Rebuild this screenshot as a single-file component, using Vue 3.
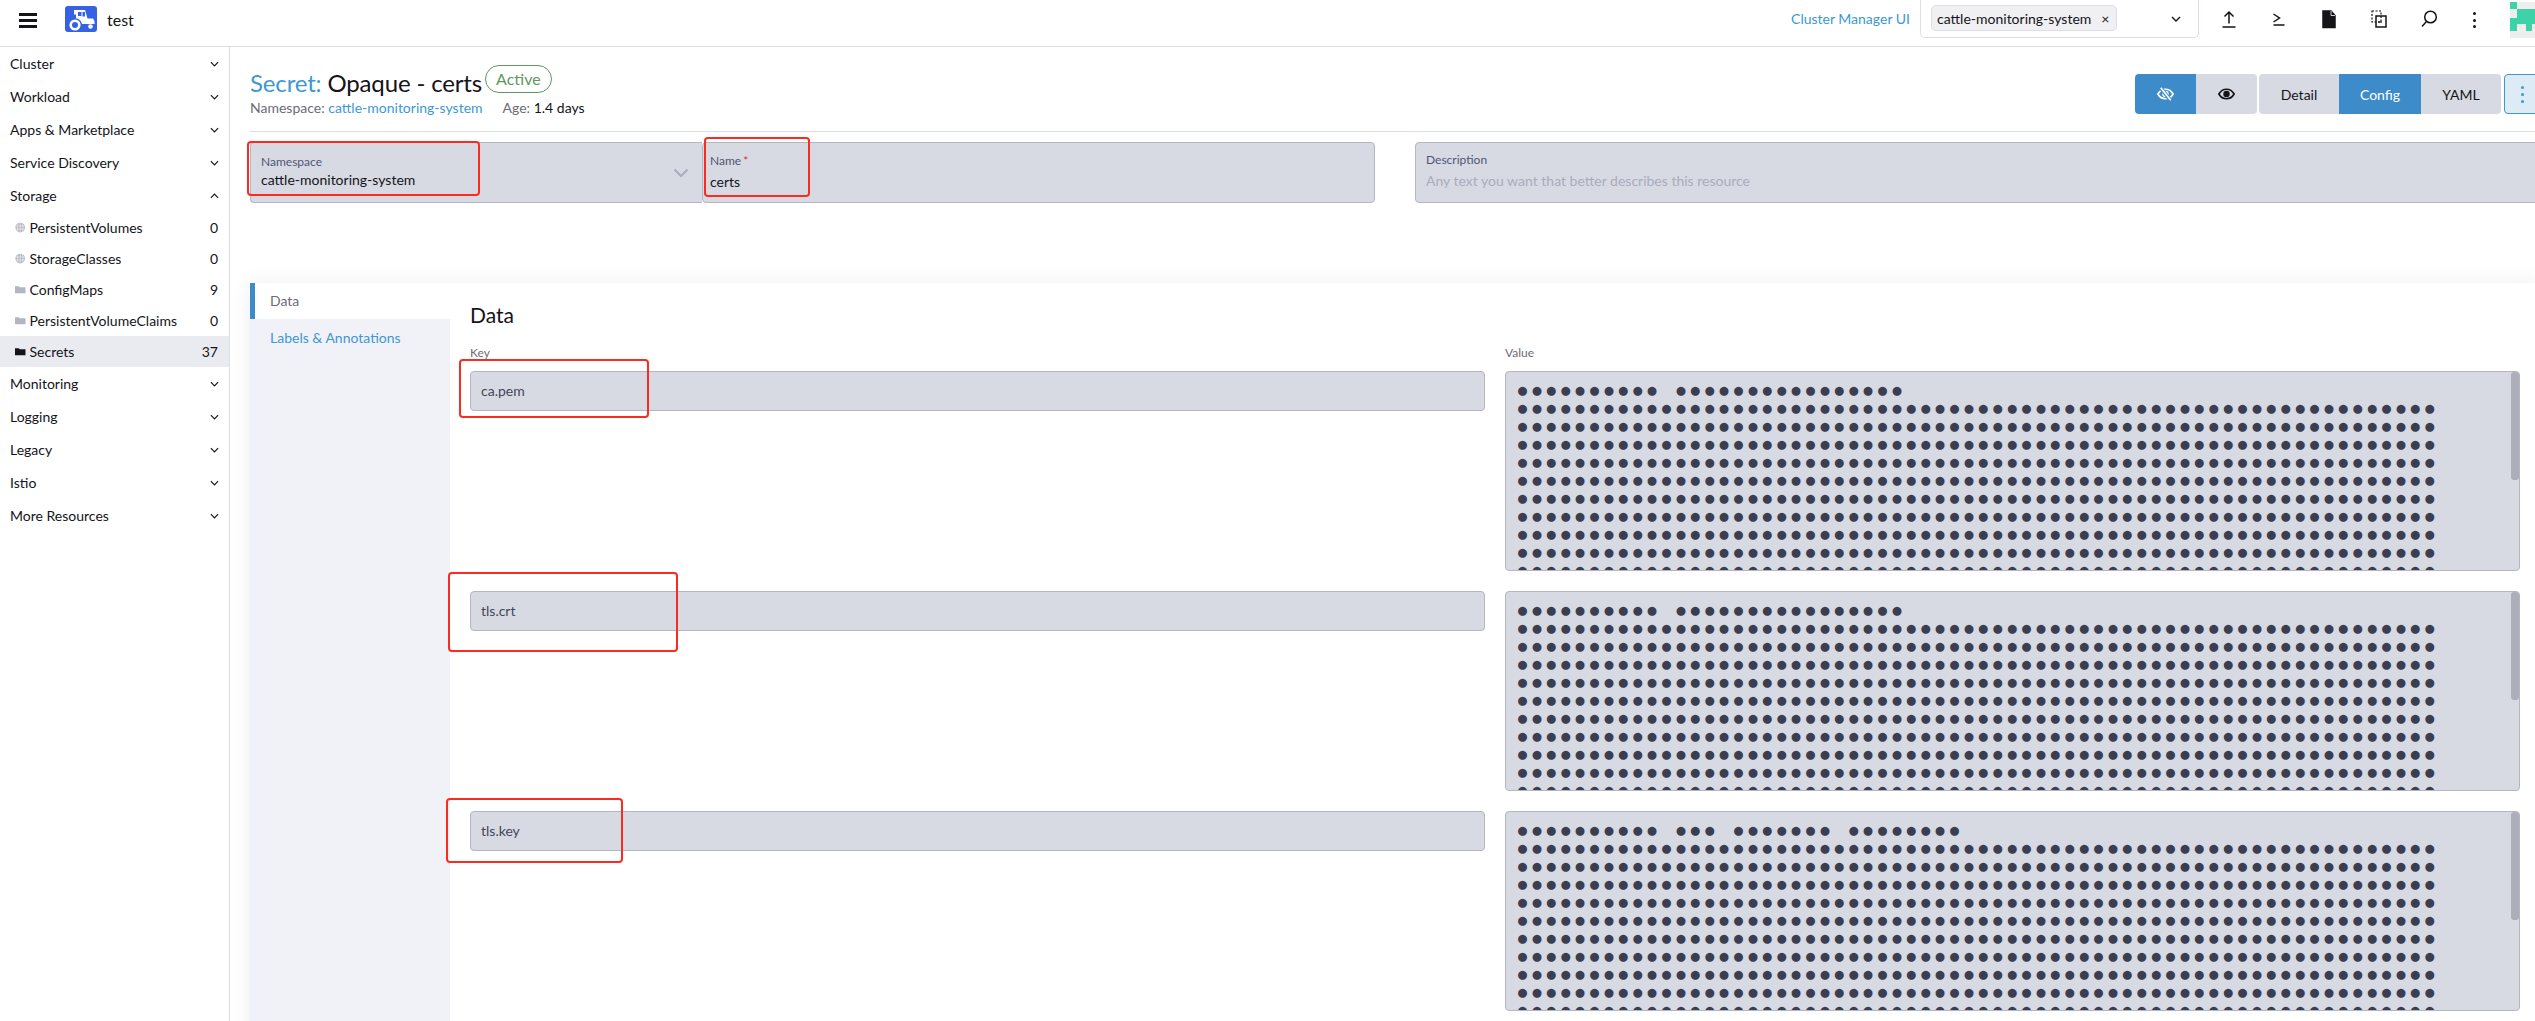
<template>
    <div class="page">
        <header class="topbar">
            <button class="burger" aria-label="Menu"><span></span><span></span><span></span></button>
            <svg class="logo" viewBox="0 0 32 26">
                <rect width="32" height="26" rx="3" fill="#3462e0" />
                <path d="M9 4h11l2.500 8.500H28l1.500 2.500v3H17c-.5-3-3-5.500-6-5.500V8.500H9z" fill="#fff" />
                <rect x="13" y="6" width="3.500" height="4" fill="#3462e0" />
                <rect x="17.500" y="6" width="2.500" height="4.500" fill="#3462e0" />
                <circle cx="10" cy="19" r="4.300" fill="none" stroke="#fff" stroke-width="2.600" />
                <circle cx="25.500" cy="20.500" r="2.300" fill="#fff" />
            </svg>
            <span class="cluster-name">test</span>
            <a class="cluster-link">Cluster Manager UI</a>
            <div class="ns-select">
                <span class="chip">cattle-monitoring-system<i>×</i></span>
                <svg class="ns-caret" viewBox="0 0 10 6"><path d="M1 1l4 4 4-4" /></svg>
            </div>
            <div class="tool" v-for="icon in tools" :key="icon">
                <svg viewBox="0 0 20 20" class="tool-icon">
                    <template v-if="icon === 'upload'">
                        <path d="M10 14.500V3M5.500 7.500L10 3l4.500 4.500M3.500 18h13" />
                    </template>
                    <template v-else-if="icon === 'shell'">
                        <path d="M4.500 5l6 4-6 4M4.500 16h11" />
                    </template>
                    <template v-else-if="icon === 'file'">
                        <path class="solid" d="M4 2h8l4 4.500V18.500H4z" />
                        <path d="M12 2v4.500h4" class="thin-light" />
                    </template>
                    <template v-else-if="icon === 'copy'">
                        <path class="thin" stroke-dasharray="2 1.500" d="M3 2h9v11H3z" />
                        <path d="M7 7h10v11H7z" />
                        <path class="thin" d="M9 13h4" />
                    </template>
                    <template v-else-if="icon === 'search'">
                        <circle cx="11.500" cy="8" r="5.800" />
                        <path d="M7.500 12.500L3 17.500" />
                    </template>
                </svg>
                <span v-if="icon === 'more'" class="kebab"><b></b><b></b><b></b></span>
            </div>
            <div class="avatar">
                <svg width="36" height="36" viewBox="0 0 5 5" shape-rendering="crispEdges">
                    <rect width="5" height="5" fill="#eeeeee" />
                    <path d="M0 0h1v1H0zM1 1h3v1.200H1zM0 2.200h4v.8H0zM0 3h1v1H0zM2.200 3H3v1h-.8z" fill="#3dd3a9" />
                </svg>
            </div>
        </header>

        <div class="layout">
            <aside class="sidebar">
                <template v-for="group in nav" :key="group.name">
                    <div class="nav-group">
                        <span>{{ group.name }}</span>
                        <svg class="chev" :class="{ up: group.items }" viewBox="0 0 10 6"><path d="M1 1l4 4 4-4" /></svg>
                    </div>
                    <div
                        v-for="item in group.items"
                        :key="item.name"
                        class="nav-item"
                        :class="{ active: item.active }"
                    >
                        <svg class="nav-icon" viewBox="0 0 14 14">
                            <template v-if="item.globe">
                                <circle cx="7" cy="7" r="6.500" class="globe-fill" />
                                <path class="globe-lines" d="M.5 5h13M.5 9h13M7 .5v13M4 1.500C3 5 3 9 4 12.500M10 1.500c1 3.500 1 7.500 0 11" />
                            </template>
                            <path v-else class="folder" d="M0 2.500h5l1.500 1.500H14v8H0z" />
                        </svg>
                        <span class="nav-label">{{ item.name }}</span>
                        <span class="nav-count">{{ item.count }}</span>
                    </div>
                </template>
            </aside>

            <main class="content">
                <section class="masthead">
                    <div>
                        <div class="title-row">
                            <h1><a>Secret:</a> Opaque - certs</h1>
                            <span class="badge">Active</span>
                        </div>
                        <div class="subtitle">
                            <span>Namespace: <a>cattle-monitoring-system</a></span>
                            <span class="age">Age: <em>1.4 days</em></span>
                        </div>
                    </div>
                    <div class="actions">
                        <div class="btn-group">
                            <button class="btn on">
                                <svg viewBox="0 0 20 14" class="eye light">
                                    <path d="M2 7c2-3.500 5-5 8-5s6 1.500 8 5c-2 3.500-5 5-8 5s-6-1.500-8-5z" />
                                    <circle cx="10" cy="7" r="2.500" />
                                    <path class="slash-gap" d="M4.500 0l11 14" />
                                    <path d="M5 .5l10.500 13" />
                                </svg>
                            </button>
                            <button class="btn">
                                <svg viewBox="0 0 20 14" class="eye">
                                    <path d="M2 7c2-3.500 5-5 8-5s6 1.500 8 5c-2 3.500-5 5-8 5s-6-1.500-8-5z" />
                                    <circle cx="10" cy="7" r="2.500" class="pupil" />
                                </svg>
                            </button>
                        </div>
                        <div class="btn-group modes">
                            <button class="btn">Detail</button>
                            <button class="btn on">Config</button>
                            <button class="btn">YAML</button>
                        </div>
                        <button class="btn-more"><span class="kebab blue"><b></b><b></b><b></b></span></button>
                    </div>
                </section>

                <section class="fields">
                    <div class="name-ns">
                        <div class="field ns">
                            <label>Namespace</label>
                            <div class="field-value">cattle-monitoring-system</div>
                            <svg class="field-caret" viewBox="0 0 16 10"><path d="M1.500 1.500L8 8l6.500-6.500" /></svg>
                        </div>
                        <div class="field name">
                            <label>Name <i>*</i></label>
                            <div class="field-value">certs</div>
                        </div>
                    </div>
                    <div class="field desc">
                        <label>Description</label>
                        <div class="field-value placeholder">Any text you want that better describes this resource</div>
                    </div>
                </section>

                <section class="tabbed">
                    <nav class="tabs">
                        <div class="tab selected">Data</div>
                        <div class="tab">Labels &amp; Annotations</div>
                    </nav>
                    <div class="tab-body">
                        <h2>Data</h2>
                        <div class="kv-grid">
                            <div class="kv-label">Key</div>
                            <div class="kv-label">Value</div>
                            <template v-for="row in secrets" :key="row.key">
                                <div class="key-input">{{ row.key }}</div>
                                <div class="value-input">
                                    <div v-for="(line, i) in row.lines" :key="i" class="concealed">{{ line }}</div>
                                    <div class="thumb"></div>
                                </div>
                            </template>
                        </div>
                    </div>
                </section>
            </main>
        </div>

        <div v-for="(mark, i) in marks" :key="i" class="mark" :style="mark"></div>
    </div>
</template>

<script setup>
const tools = ['upload', 'shell', 'file', 'copy', 'search', 'more'];

const nav = [
    { name: 'Cluster' },
    { name: 'Workload' },
    { name: 'Apps & Marketplace' },
    { name: 'Service Discovery' },
    {
        name: 'Storage',
        items: [
            { name: 'PersistentVolumes', count: 0, globe: true },
            { name: 'StorageClasses', count: 0, globe: true },
            { name: 'ConfigMaps', count: 9 },
            { name: 'PersistentVolumeClaims', count: 0 },
            { name: 'Secrets', count: 37, active: true },
        ],
    },
    { name: 'Monitoring' },
    { name: 'Logging' },
    { name: 'Legacy' },
    { name: 'Istio' },
    { name: 'More Resources' },
];

// values are shown concealed, one dot per character, spaces stay
const conceal = (text) => text.replace(/\S/g, '●');
const maskedLines = (head) => [conceal(head), ...Array(10).fill('●'.repeat(64))];

const secrets = [
    { key: 'ca.pem', lines: maskedLines('-----BEGIN CERTIFICATE-----') },
    { key: 'tls.crt', lines: maskedLines('-----BEGIN CERTIFICATE-----') },
    { key: 'tls.key', lines: maskedLines('-----BEGIN RSA PRIVATE KEY-----') },
];

// red annotation boxes drawn over the screenshot
const box = (x1, y1, x2, y2) => ({
    left: x1 + 'px',
    top: y1 + 'px',
    width: x2 - x1 + 'px',
    height: y2 - y1 + 'px',
});

const marks = [
    box(247, 141, 480, 196),
    box(704, 137, 810, 197),
    box(459, 359, 649, 418),
    box(448, 572, 678, 652),
    box(446, 798, 623, 863),
];
</script>

<style>
html,
body {
    margin: 0;
    background: #fff;
    overflow: hidden;
}
</style>

<style scoped>
.page {
    position: relative;
    width: 2535px;
    height: 1021px;
    overflow: hidden;
    font-family: Lato, "Noto Sans", sans-serif;
    font-size: 14px;
    color: #141419;
    background: #fff;
}

a {
    color: #3d98d3;
}

button {
    font: inherit;
    color: inherit;
    border: 0;
    padding: 0;
}

/* top bar */
.topbar {
    display: flex;
    align-items: flex-start;
    height: 46px;
    border-bottom: 1px solid #dcdee7;
}

.burger {
    display: flex;
    flex-direction: column;
    gap: 3.500px;
    width: 18px;
    margin: 13px 28px 0 19px;
    background: none;
}

.burger span {
    height: 2.500px;
    background: #141419;
}

.logo {
    width: 32px;
    height: 26px;
    margin-top: 6px;
}

.cluster-name {
    margin: 10px 0 0 10px;
    font-size: 16px;
    line-height: 20px;
}

.cluster-link {
    margin: 9px 10px 0 auto;
    line-height: 20px;
}

.ns-select {
    display: flex;
    align-items: flex-start;
    box-sizing: border-box;
    width: 279px;
    height: 38px;
    margin-right: 5px;
    padding: 5px 0 0 10px;
    border: 1px solid #dcdee7;
    border-top: 0;
    border-radius: 0 0 5px 5px;
}

.chip {
    display: flex;
    align-items: center;
    box-sizing: border-box;
    width: 186px;
    height: 26px;
    padding-left: 5px;
    background: #f0f0f3;
    border: 1px solid #dcdee7;
    border-radius: 5px;
    white-space: nowrap;
}

.chip i {
    margin-left: 10px;
    font-style: normal;
}

.ns-caret {
    width: 10px;
    height: 6px;
    margin: 11px 0 0 54px;
    fill: none;
    stroke: #141419;
    stroke-width: 1.400;
}

.tool {
    display: flex;
    justify-content: center;
    width: 50px;
    padding-top: 9px;
}

.tool:nth-last-child(2) {
    width: 41px;
    margin-right: 15px;
}

.tool-icon {
    width: 20px;
    height: 20px;
    fill: none;
    stroke: #141419;
    stroke-width: 1.500;
}

.tool:nth-last-child(2) .tool-icon {
    display: none;
}

.solid {
    fill: #141419;
}

.thin {
    stroke-width: 1.200;
}

.thin-light {
    stroke: #fff;
    stroke-width: 0.800;
}

.kebab {
    display: flex;
    flex-direction: column;
    gap: 3.500px;
    padding-top: 3px;
}

.kebab b {
    width: 3px;
    height: 3px;
    border-radius: 50%;
    background: #141419;
}

.kebab.blue {
    gap: 4px;
    padding: 0;
}

.kebab.blue b {
    width: 3px;
    height: 3px;
    background: #3d98d3;
}

.avatar {
    width: 25px;
    height: 36px;
    margin-top: 2px;
    overflow: hidden;
}

.avatar svg {
    display: block;
}

/* sidebar */
.layout {
    display: flex;
    height: 974px;
}

.sidebar {
    flex: 0 0 229px;
    border-right: 1px solid #dcdee7;
}

.nav-group {
    display: flex;
    align-items: center;
    justify-content: space-between;
    height: 33px;
    padding: 0 10px 0 10px;
    font-size: 14px;
}

.chev {
    width: 9px;
    height: 6px;
    fill: none;
    stroke: #141419;
    stroke-width: 1.300;
}

.chev.up {
    transform: rotate(180deg);
}

.nav-item {
    display: flex;
    align-items: center;
    height: 31px;
    padding: 0 11px 0 15px;
}

.nav-item.active {
    background: #eaebf0;
}

.nav-icon {
    flex: none;
    width: 10.500px;
    height: 11px;
    margin-right: 4px;
}

.globe-fill {
    fill: #b4b5c2;
}

.globe-lines {
    fill: none;
    stroke: #fff;
    stroke-width: 0.700;
}

.folder {
    fill: #b4b5c2;
}

.active .folder {
    fill: #141419;
}

.nav-label {
    flex: 1;
}

/* main column */
.content {
    flex: 0 0 2290px;
    padding-left: 20px;
}

.masthead {
    display: flex;
    justify-content: space-between;
    box-sizing: border-box;
    height: 85px;
    padding-top: 22px;
    border-bottom: 1px solid #dcdee7;
}

.title-row {
    display: flex;
    align-items: flex-start;
}

h1 {
    margin: 0;
    font-size: 24px;
    font-weight: 400;
    line-height: 28px;
    letter-spacing: -0.150px;
}

.badge {
    box-sizing: border-box;
    height: 28px;
    margin: -4px 0 0 3px;
    padding: 0 10px;
    border: 1px solid #5d995d;
    border-radius: 14px;
    color: #5d995d;
    font-size: 16px;
    line-height: 25px;
}

.subtitle {
    margin-top: 1px;
    line-height: 20px;
    color: #6c6c76;
}

.age {
    margin-left: 20px;
}

.age em {
    font-style: normal;
    color: #141419;
}

.actions {
    display: flex;
    align-items: flex-start;
    gap: 2px;
    margin-top: 5px;
}

.btn-group {
    display: flex;
    overflow: hidden;
    border-radius: 4px;
}

.btn {
    display: flex;
    align-items: center;
    justify-content: center;
    width: 61px;
    height: 40px;
    background: #d8dae3;
}

.btn.on {
    background: #3d8bc9;
    color: #fff;
}

.modes .btn {
    width: 80px;
}

.modes .btn.on {
    width: 82px;
}

.eye {
    width: 19px;
    height: 14px;
    fill: none;
    stroke: #141419;
    stroke-width: 1.800;
}

.eye.light {
    stroke: #fff;
}

.eye .slash-gap {
    stroke: #3d8bc9;
    stroke-width: 4;
}

.pupil {
    fill: #141419;
}

.btn-more {
    display: flex;
    align-items: center;
    justify-content: center;
    box-sizing: border-box;
    width: 36px;
    height: 40px;
    margin-left: 1px;
    background: #dcebf6;
    border: 1px solid #3d98d3;
    border-radius: 4px;
}

/* form fields */
.fields {
    display: grid;
    grid-template-columns: 1125px 1125px;
    column-gap: 40px;
    margin-top: 10px;
}

.name-ns {
    display: flex;
}

.field {
    position: relative;
    box-sizing: border-box;
    height: 61px;
    padding: 11px 10px 0;
    background: #d8dae3;
    border: 1px solid #b6b6c2;
    border-radius: 4px;
}

.field.ns {
    flex: 0 0 452px;
    border-right: 0;
    border-radius: 4px 0 0 4px;
}

.field.name {
    flex: 1;
    padding-left: 7px;
    padding-top: 10px;
}

.field label {
    display: block;
    font-size: 12px;
    line-height: 16px;
    color: #4f5574;
}

.field label i {
    font-style: normal;
    color: #d8332f;
    margin-left: -1px;
}

.field-value {
    margin-top: 1px;
    line-height: 18px;
}

.field.name .field-value {
    margin-top: 4px;
}

.placeholder {
    color: #a9acbc;
}

.field.desc {
    padding-top: 9px;
}

.field.desc .field-value {
    margin-top: 4px;
}

.field-caret {
    position: absolute;
    right: 13px;
    top: 25px;
    width: 16px;
    height: 10px;
    fill: none;
    stroke: #a9adbc;
    stroke-width: 2;
}

/* tabs */
.tabbed {
    display: flex;
    margin-top: 80px;
    height: 760px;
    box-shadow: 0 0 20px rgba(20, 20, 40, 0.07);
}

.tabs {
    flex: 0 0 200px;
    display: flex;
    flex-direction: column;
    background: #f1f2f7;
}

.tab {
    box-sizing: border-box;
    height: 36px;
    padding-left: 20px;
    line-height: 38px;
    color: #3d98d3;
}

.tab.selected {
    background: #fff;
    border-left: 5px solid #3d8bc9;
    padding-left: 15px;
    line-height: 36px;
    color: #6c6c76;
}

.tab-body {
    flex: 1;
    padding: 20px 20px 0;
}

h2 {
    margin: 0;
    font-size: 21px;
    font-weight: 400;
    line-height: 24px;
}

.kv-grid {
    display: grid;
    grid-template-columns: 1fr 1fr;
    column-gap: 20px;
    row-gap: 20px;
    margin-top: 19px;
}

.kv-label {
    font-size: 12px;
    line-height: 14px;
    margin-bottom: -9px;
    color: #6c6c76;
}

.key-input {
    box-sizing: border-box;
    height: 40px;
    padding-left: 10px;
    background: #d8dae3;
    border: 1px solid #b6b6c2;
    border-radius: 4px;
    line-height: 38px;
    color: #43465a;
}

.value-input {
    position: relative;
    box-sizing: border-box;
    height: 200px;
    overflow: hidden;
    padding: 9px 0 0 12px;
    background: #d8dae3;
    border: 1px solid #b6b6c2;
    border-radius: 4px;
}

.concealed {
    height: 18px;
    font-family: "DejaVu Sans Mono", monospace;
    font-size: 15px;
    letter-spacing: 5.370px;
    line-height: 18px;
    white-space: pre;
    color: #3a3e50;
}

.thumb {
    position: absolute;
    top: 0;
    right: 0;
    width: 8px;
    height: 108px;
    background: #aeaeba;
    border-radius: 3px;
}

/* annotations */
.mark {
    position: absolute;
    box-sizing: border-box;
    border: 2.500px solid #fb2c1f;
    border-radius: 4px;
    pointer-events: none;
}
</style>
